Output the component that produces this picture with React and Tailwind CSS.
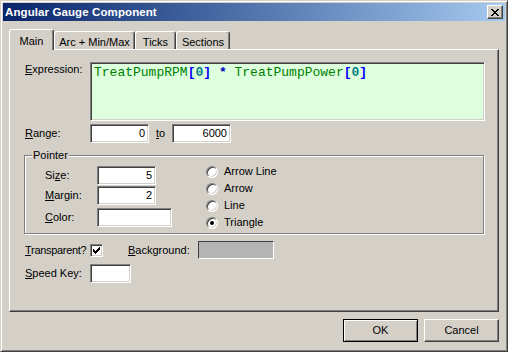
const sunken =
  'border border-t-[#808080] border-l-[#808080] border-b-white border-r-white shadow-[inset_1px_1px_0_#404040,inset_-1px_-1px_0_#d4d0c8]';

function Ul({ children }) {
  return <span className="underline underline-offset-[1px]">{children}</span>;
}

function Field({ className = '', children }) {
  return (
    <div className={`${sunken} bg-white flex items-center justify-end pr-[3px] text-black ${className}`}>
      {children}
    </div>
  );
}

function Radio({ checked, label }) {
  return (
    <div className="flex items-center h-[17px]">
      <div className="w-[12px] h-[12px] rounded-full bg-white border border-t-[#808080] border-l-[#808080] border-b-white border-r-white shadow-[inset_1px_1px_0_#404040,inset_-1px_-1px_0_#d4d0c8] flex items-center justify-center">
        {checked && <div className="w-[4px] h-[4px] rounded-full bg-black" />}
      </div>
      <span className="ml-[6px]">{label}</span>
    </div>
  );
}

function CloseGlyph() {
  const px = [
    [0, 0], [1, 0], [6, 0], [7, 0],
    [1, 1], [2, 1], [5, 1], [6, 1],
    [2, 2], [3, 2], [4, 2], [5, 2],
    [3, 3], [4, 3],
    [2, 4], [3, 4], [4, 4], [5, 4],
    [1, 5], [2, 5], [5, 5], [6, 5],
    [0, 6], [1, 6], [6, 6], [7, 6],
  ];
  return (
    <svg width="8" height="7" viewBox="0 0 8 7" shapeRendering="crispEdges">
      {px.map(([x, y]) => (
        <rect key={`${x}-${y}`} x={x} y={y} width="1" height="1" fill="#000" />
      ))}
    </svg>
  );
}

function CheckGlyph() {
  const px = [
    [6, 0],
    [5, 1], [6, 1],
    [0, 2], [4, 2], [5, 2], [6, 2],
    [0, 3], [1, 3], [3, 3], [4, 3], [5, 3],
    [0, 4], [1, 4], [2, 4], [3, 4], [4, 4],
    [1, 5], [2, 5], [3, 5],
    [2, 6],
  ];
  return (
    <svg width="7" height="7" viewBox="0 0 7 7" shapeRendering="crispEdges">
      {px.map(([x, y]) => (
        <rect key={`${x}-${y}`} x={x} y={y} width="1" height="1" fill="#000" />
      ))}
    </svg>
  );
}

const tabBase =
  'flex justify-center bg-[#d4d0c8] border-t border-l border-r border-t-white border-l-white border-r-[#404040] rounded-t-[3px] shadow-[inset_-1px_0_0_#808080]';

export default function App() {
  return (
    <div
      className="w-[508px] h-[352px] bg-[#d4d0c8] border border-t-[#d4d0c8] border-l-[#d4d0c8] border-r-[#404040] border-b-[#404040] shadow-[inset_1px_1px_0_#fff,inset_-1px_-1px_0_#808080] p-[2px] flex flex-col text-[11px] leading-[13px] text-black"
      style={{ fontFamily: '"Liberation Sans", Arial, sans-serif' }}
    >
      {/* title bar */}
      <div className="h-[18px] shrink-0 bg-gradient-to-r from-[#0a246a] to-[#a6caf0] flex items-center justify-between pl-[2px] pr-[2px]">
        <span className="text-white font-bold text-[11.5px] tracking-[0.1px]">Angular Gauge Component</span>
        <div className="w-[16px] h-[14px] bg-[#d4d0c8] border border-t-white border-l-white border-b-[#404040] border-r-[#404040] shadow-[inset_-1px_-1px_0_#808080] flex items-center justify-center">
          <CloseGlyph />
        </div>
      </div>

      <div className="flex-1 flex flex-col px-[6px]">
        {/* tabs */}
        <div className="flex items-end h-[20px] mt-[8px]">
          <div className={`${tabBase} relative z-10 -mb-px h-[21px] w-[45px] pt-[5px]`}>Main</div>
          <div className={`${tabBase} h-[18px] w-[81px] pt-[4px]`}>Arc + Min/Max</div>
          <div className={`${tabBase} h-[18px] w-[41px] pt-[4px]`}>Ticks</div>
          <div className={`${tabBase} h-[18px] w-[54px] pt-[4px]`}>Sections</div>
        </div>

        {/* tab panel */}
        <div className="h-[263px] shrink-0 border border-t-white border-l-white border-r-[#404040] border-b-[#404040] shadow-[inset_-1px_-1px_0_#808080] pl-[15px] pt-[12px]">
          <div className="flex">
            <div className="w-[65px] pt-[1px]">
              <Ul>E</Ul>xpression:
            </div>
            <div
              className={`${sunken} bg-[#ddffdd] w-[395px] h-[59px] pl-[3px] pt-[2px] text-[13px] leading-[15px] text-[#008000]`}
              style={{ fontFamily: '"Liberation Mono", "Courier New", monospace' }}
            >
              TreatPumpRPM<b className="text-[#0000ff]">[</b>
              <b className="text-[#008080]">0</b>
              <b className="text-[#0000ff]">]</b> <b className="text-[#0000c0]">*</b> TreatPumpPower
              <b className="text-[#0000ff]">[</b>
              <b className="text-[#008080]">0</b>
              <b className="text-[#0000ff]">]</b>
            </div>
          </div>

          <div className="flex items-center mt-[3px] h-[19px]">
            <div className="w-[65px]">
              <Ul>R</Ul>ange:
            </div>
            <Field className="w-[59px] h-[19px]">0</Field>
            <div className="w-[23px] pl-[7px]">
              <Ul>t</Ul>o
            </div>
            <Field className="w-[59px] h-[19px]">6000</Field>
          </div>

          {/* Pointer group */}
          <div className="relative mt-[12px] ml-[-1px] w-[460px] h-[79px] border border-[#808080] shadow-[inset_1px_1px_0_#fff,1px_1px_0_#fff] flex">
            <span className="absolute left-[7px] top-[-7px] px-[1px] bg-[#d4d0c8]">Pointer</span>
            <div className="pl-[20px] pt-[10px] flex flex-col">
              <div className="flex items-center h-[19px]">
                <div className="w-[52px]">
                  Si<Ul>z</Ul>e:
                </div>
                <Field className="w-[59px] h-[19px]">5</Field>
              </div>
              <div className="flex items-center h-[19px] mt-[1px]">
                <div className="w-[52px]">
                  <Ul>M</Ul>argin:
                </div>
                <Field className="w-[59px] h-[19px]">2</Field>
              </div>
              <div className="flex items-center h-[19px] mt-[3px]">
                <div className="w-[52px]">
                  <Ul>C</Ul>olor:
                </div>
                <Field className="w-[75px] h-[19px]" />
              </div>
            </div>
            <div className="ml-[34px] pt-[7px] flex flex-col">
              <Radio label="Arrow Line" />
              <Radio label="Arrow" />
              <Radio label="Line" />
              <Radio label="Triangle" checked />
            </div>
          </div>

          <div className="flex items-center mt-[7px] h-[18px]">
            <div className="w-[65px] tracking-[-0.3px]">
              <Ul>T</Ul>ransparent?
            </div>
            <div className={`${sunken} bg-white w-[13px] h-[13px] flex items-center justify-center`}>
              <CheckGlyph />
            </div>
            <div className="w-[70px] ml-[25px]">
              <Ul>B</Ul>ackground:
            </div>
            <div className="w-[76px] h-[18px] bg-[#b4b4b4] border border-t-[#404040] border-l-[#404040] border-b-white border-r-white" />
          </div>

          <div className="flex items-center mt-[5px] h-[19px]">
            <div className="w-[65px]">
              <Ul>S</Ul>peed Key:
            </div>
            <Field className="w-[41px] h-[19px]" />
          </div>
        </div>

        {/* buttons */}
        <div className="flex justify-end gap-[6px] mt-[7px]">
          <div className="w-[75px] h-[23px] border border-black shadow-[inset_1px_1px_0_#fff,inset_-1px_-1px_0_#808080] flex items-center justify-center">
            OK
          </div>
          <div className="w-[75px] h-[23px] border border-t-white border-l-white border-b-[#404040] border-r-[#404040] shadow-[inset_-1px_-1px_0_#808080] flex items-center justify-center">
            Cancel
          </div>
        </div>
      </div>
    </div>
  );
}
